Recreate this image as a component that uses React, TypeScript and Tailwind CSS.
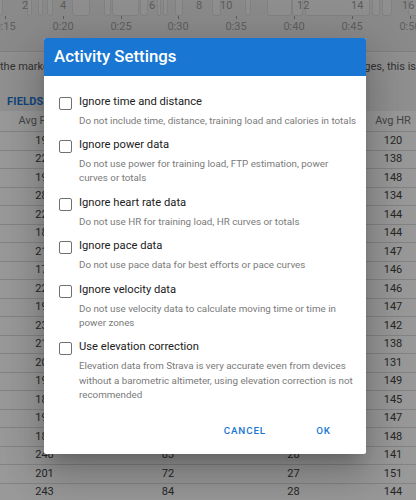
import React from 'react'

// Background page (activity view) dimmed behind the settings dialog.

const segments: [number, number][] = [
  [-6, 9], [27, 5], [38, 5], [47, 6], [72, 18], [104, 7], [112, 27], [140, 8],
  [157, 4], [163, 5], [175, 8], [212, 9], [245, 6], [267, 25], [292, 11],
  [305, 65], [372, 8], [382, 10], [408, 12],
]

const laps = [
  { n: '2', x: 22 }, { n: '4', x: 60 }, { n: '6', x: 149 }, { n: '8', x: 196 },
  { n: '10', x: 220 }, { n: '12', x: 297 }, { n: '14', x: 351 }, { n: '16', x: 402 },
]

const ticks = [
  { t: '0:15', x: 5 }, { t: '0:20', x: 63 }, { t: '0:25', x: 121 }, { t: '0:30', x: 178 },
  { t: '0:35', x: 236 }, { t: '0:40', x: 294 }, { t: '0:45', x: 352 }, { t: '0:50', x: 410 },
]

const rows = [
  ['195', '68', '24', '120'], ['224', '77', '26', '138'], ['197', '71', '25', '148'],
  ['281', '90', '31', '134'], ['226', '78', '27', '144'], ['183', '65', '24', '144'],
  ['214', '74', '26', '147'], ['172', '62', '23', '146'], ['225', '78', '27', '146'],
  ['196', '70', '25', '147'], ['231', '80', '28', '142'], ['215', '75', '26', '138'],
  ['203', '72', '26', '131'], ['194', '69', '25', '149'], ['187', '66', '24', '145'],
  ['192', '68', '25', '147'], ['186', '65', '24', '148'], ['248', '83', '28', '141'],
  ['201', '72', '27', '151'], ['243', '84', '28', '144'],
]

// descriptions kept as the lines the dialog shows them in
const options = [
  { label: 'Ignore time and distance', desc: ['Do not include time, distance, training load and calories in totals'] },
  { label: 'Ignore power data', desc: ['Do not use power for training load, FTP estimation, power', 'curves or totals'] },
  { label: 'Ignore heart rate data', desc: ['Do not use HR for training load, HR curves or totals'] },
  { label: 'Ignore pace data', desc: ['Do not use pace data for best efforts or pace curves'] },
  { label: 'Ignore velocity data', desc: ['Do not use velocity data to calculate moving time or time in', 'power zones'] },
  {
    label: 'Use elevation correction',
    desc: [
      'Elevation data from Strava is very accurate even from devices',
      'without a barometric altimeter, using elevation correction is not',
      'recommended',
    ],
  },
]

function Page() {
  return (
    <div className="w-full h-full bg-white">
      {/* timeline strip */}
      <div className="relative h-[52px] bg-[#e6e6e6] border-b border-[#d4d4d4] overflow-hidden">
        {segments.map(([x, w], i) => (
          <div
            key={i}
            className="absolute top-[-4px] h-[20px] rounded-b-[3px] bg-[#efefef] border border-[#d9d9d9]"
            style={{ left: x, width: w }}
          />
        ))}
        {laps.map(l => (
          <span key={l.n} className="absolute top-[-1px] text-[11px] leading-[14px] text-[#999]" style={{ left: l.x }}>
            {l.n}
          </span>
        ))}
        {ticks.map(t => (
          <React.Fragment key={t.t}>
            <div className="absolute top-[16px] w-px h-[3px] bg-[#9a9a9a]" style={{ left: t.x }} />
            <span
              className="absolute top-[20px] -translate-x-1/2 text-[11px] leading-[14px] text-[#9e9e9e]"
              style={{ left: t.x }}
            >
              {t.t}
            </span>
          </React.Fragment>
        ))}
      </div>

      <div className="flex justify-between pt-[8px] pb-[2px] text-[11px] leading-[14px] text-[#555] whitespace-nowrap overflow-hidden bg-[#f1f1f1]">
        <span>the markers to select a range.</span>
        <span>Drag the edges, this is</span>
      </div>

      <div className="bg-[#f1f1f1] pt-[12px] pl-[7px] h-[35px]">
        <span className="text-[11px] leading-[14px] font-bold tracking-[0.2px] text-[#1976d2]">FIELDS</span>
      </div>

      <div className="w-[446px]">
        <div className="grid grid-cols-[89px_158px_93px_106px] h-[21px] items-center border-b border-[#dcdcdc] text-[11px] text-[#757575] text-center">
          <span>Avg Power</span>
          <span>Avg Cad</span>
          <span>Avg Speed</span>
          <span>Avg HR</span>
        </div>
        {rows.map((r, i) => (
          <div
            key={i}
            className="grid grid-cols-[89px_158px_93px_106px] h-[18.5px] items-center border-b border-[#dcdcdc] text-[11px] text-[#424242] text-center"
          >
            {r.map((c, j) => (
              <span key={j}>{c}</span>
            ))}
          </div>
        ))}
      </div>
    </div>
  )
}

export default function App() {
  return (
    <div className="relative w-[416px] h-[500px] overflow-hidden font-['Roboto',sans-serif]">
      <Page />

      <div className="absolute inset-0 bg-black/40" />

      <div className="absolute top-[38px] left-[44px] w-[322px] bg-white rounded-[2px] overflow-hidden shadow-[0_11px_15px_-7px_rgba(0,0,0,0.2),0_24px_38px_3px_rgba(0,0,0,0.14),0_9px_46px_8px_rgba(0,0,0,0.12)]">
        <header className="h-[38px] bg-[#1976d2] flex items-center pl-[10px]">
          <h2 className="text-[16.8px] font-medium text-white">Activity Settings</h2>
        </header>

        <div className="pl-[15px] pr-[8px] pt-[17.5px] flex flex-col gap-[9px]">
          {options.map(o => (
            <label key={o.label} className="flex gap-[7px]">
              <span className="mt-[3px] w-[13px] h-[13px] shrink-0 rounded-[2px] border-[1.5px] border-[#707070]" />
              <span className="flex-1 min-w-0">
                <span className="block text-[11.2px] leading-[16px] text-[#212121]">{o.label}</span>
                <span className="block mt-[4px] text-[9.8px] leading-[14.4px] text-[#7a7a7a] whitespace-nowrap">
                  {o.desc.map(line => (
                    <span key={line} className="block">{line}</span>
                  ))}
                </span>
              </span>
            </label>
          ))}
        </div>

        <div className="flex justify-end items-center gap-[29px] pr-[20px] pt-[17px] pb-[10px]">
          <button className="h-[24px] px-[6px] text-[9.8px] font-medium tracking-[0.875px] text-[#1976d2]">CANCEL</button>
          <button className="h-[24px] w-[45px] text-[9.8px] font-medium tracking-[0.875px] text-[#1976d2]">OK</button>
        </div>
      </div>
    </div>
  )
}
